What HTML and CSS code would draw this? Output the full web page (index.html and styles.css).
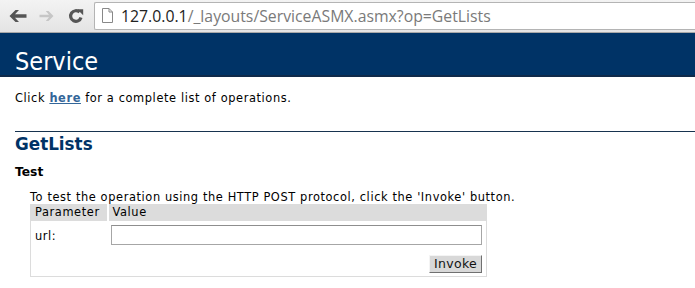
FILE: index.html
```html
<!DOCTYPE html>
<html lang="en">

<head>
    <meta charset="UTF-8">
    <title>Service Web Service</title>
    <link rel="stylesheet" href="styles.css">
</head>

<body>
    <div class="toolbar">
        <span class="nav-btn">
            <svg width="18" height="14" viewBox="0 0 18 14"><path d="M0.5 7 L6.5 1 H10 L6 5.3 H17.5 V8.7 H6 L10 13 H6.5 Z" fill="#555"/></svg>
        </span>
        <span class="nav-btn">
            <svg width="15" height="12" viewBox="0 0 15 12"><path d="M14.5 6 L9.5 1 H6.8 L10 4.7 H0.5 V7.3 H10 L6.8 11 H9.5 Z" fill="#c6c6c6"/></svg>
        </span>
        <span class="nav-btn">
            <svg width="16" height="16" viewBox="0 0 16 16"><path d="M13 9.5 A5.3 5.3 0 1 1 11.6 4.2" fill="none" stroke="#555" stroke-width="3.2"/><path d="M9.2 1.2 L15.2 1.2 L15.2 7.2 Z" fill="#555"/></svg>
        </span>
        <div class="address">
            <svg class="page-icon" width="11" height="15" viewBox="0 0 11 15"><path d="M0.5 0.5 H7 L10.5 4 V14.5 H0.5 Z M7 0.5 V4 H10.5" fill="#fff" stroke="#888"/></svg>
            <span class="host">127.0.0.1</span><span class="path">/_layouts/ServiceASMX.asmx?op=GetLists</span>
        </div>
    </div>

    <div class="page">
        <p class="heading1">Service</p>
        <div class="content">
            <p class="intro">Click <a href="#">here</a> for a complete list of operations.</p>
            <h2>GetLists</h2>
            <h3>Test</h3>
            <p class="frmtext">To test the operation using the HTTP POST protocol, click the 'Invoke' button.</p>
            <form>
                <table class="frm">
                    <tr>
                        <td class="frm-header param">Parameter</td>
                        <td class="frm-header">Value</td>
                    </tr>
                    <tr>
                        <td class="frm-label">url:</td>
                        <td class="frm-value"><input class="frm-input" type="text" name="url"></td>
                    </tr>
                    <tr>
                        <td></td>
                        <td class="frm-submit"><input type="submit" value="Invoke" class="button"></td>
                    </tr>
                </table>
            </form>
        </div>
    </div>
</body>

</html>
```

FILE: styles.css
```css
* {
    box-sizing: border-box;
}

body {
    margin: 0;
    background: #ffffff;
    color: #000000;
    font-family: "DejaVu Sans", Verdana, sans-serif;
    overflow: hidden;
}

.toolbar {
    height: 33px;
    display: flex;
    align-items: center;
    padding-left: 3px;
    background: linear-gradient(#f3f3f3, #e4e4e4);
    border-bottom: 1px solid #a8a8a8;
}

.nav-btn {
    width: 29px;
    height: 28px;
    display: flex;
    align-items: center;
    justify-content: center;
}

.address {
    flex: 1;
    height: 28px;
    margin-left: 4px;
    margin-top: -1px;
    display: flex;
    align-items: center;
    padding-left: 7px;
    background: #ffffff;
    border: 1px solid #b4b4b4;
    border-right: none;
    border-radius: 2px 0 0 2px;
    font-family: "Open Sans", sans-serif;
    font-size: 15.8px;
    white-space: nowrap;
}

.page-icon {
    margin-right: 8px;
}

.host {
    color: #222222;
}

.path {
    color: #7a7a7a;
}

.heading1 {
    margin: 0;
    padding: 14px 0 0 15px;
    height: 44px;
    background: #003366;
    border-bottom: 2px solid #0f2a4a;
    color: #ffffff;
    font-family: "DejaVu Sans Condensed", "DejaVu Sans", sans-serif;
    font-stretch: condensed;
    font-size: 25px;
    line-height: 30px;
    font-weight: normal;
}

.content {
    margin-left: 30px;
    font-size: 11.4px;
    letter-spacing: 0.6px;
}

.intro {
    margin: 14px 0 0 -15px;
    line-height: 14px;
}

a {
    color: #336699;
    font-weight: bold;
    text-decoration: underline;
}

h2 {
    margin: 26px 0 0 -15px;
    padding-top: 2px;
    border-top: 1px solid #17334f;
    color: #003366;
    font-size: 16.8px;
    line-height: 20px;
    letter-spacing: 0;
}

h3 {
    margin: 11px 0 0 -15px;
    font-size: 12.3px;
    line-height: 15px;
    letter-spacing: 0;
}

.frmtext {
    margin: 10px 0 0 0;
    line-height: 14px;
}

form {
    margin: 0;
}

.frm {
    width: 457px;
    border-collapse: collapse;
    border: 1px solid #dcdcdc;
    table-layout: fixed;
}

.frm td {
    padding: 0 4px;
}

.frm-header {
    height: 16px;
    background: #dcdcdc;
    line-height: 13px;
}

.frm-header.param {
    width: 77px;
    border-right: 2px solid #ffffff;
}

.frm-label {
    height: 28px;
    padding-top: 2px !important;
}

.frm-value {
    padding: 4px 4px 4px 3px !important;
}

.frm-input {
    display: block;
    width: 371px;
    height: 20px;
    margin: 0;
    border: 1px solid #a6a6a6;
    border-top-color: #8e8e8e;
    font-family: "DejaVu Sans", Verdana, sans-serif;
    font-size: 11.2px;
}

.frm-submit {
    height: 27px;
    vertical-align: top;
    text-align: right;
    padding: 6px 4px 3px !important;
}

.button {
    display: inline-block;
    vertical-align: top;
    height: 18px;
    padding: 0 4px;
    margin: 0;
    background: #d8d8d8;
    border: 1px solid;
    border-color: #f4f4f4 #707070 #707070 #f4f4f4;
    font-family: "DejaVu Sans", Verdana, sans-serif;
    font-size: 12.5px;
    line-height: 15px;
    letter-spacing: 0.3px;
    color: #111111;
}
```
